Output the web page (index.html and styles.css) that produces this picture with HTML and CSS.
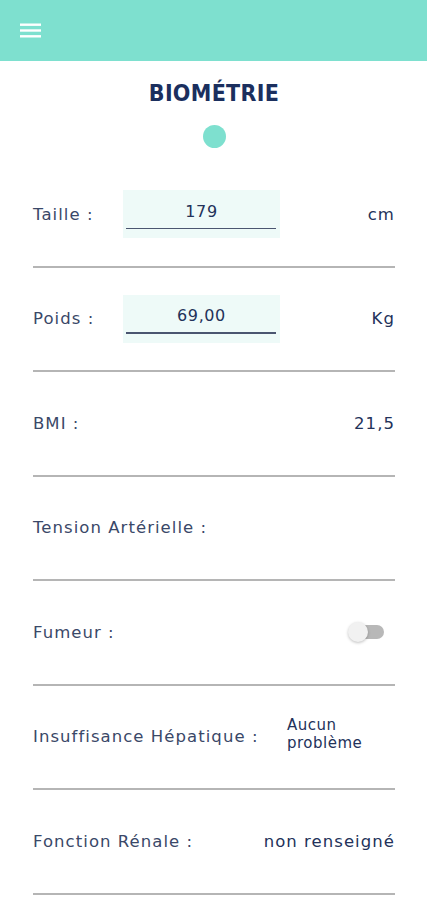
FILE: index.html
```html
<!DOCTYPE html>
<html lang="fr">
<head>
<meta charset="utf-8">
<link rel="stylesheet" href="styles.css">
</head>
<body>
<header class="topbar">
  <svg class="menu" width="21" height="15" viewBox="0 0 21 15"><rect x="0" y="0.5" width="21" height="2.4" fill="#fff"/><rect x="0" y="6.3" width="21" height="2.4" fill="#fff"/><rect x="0" y="12.1" width="21" height="2.4" fill="#fff"/></svg>
</header>
<main class="content">
  <h1 class="title">BIOMÉTRIE</h1>
  <div class="dot"></div>
  <div class="rows">
    <div class="row">
      <span class="label fixed">Taille :</span>
      <div class="field"><span class="field-value">179</span></div>
      <span class="unit">cm</span>
    </div>
    <div class="row">
      <span class="label fixed">Poids :</span>
      <div class="field"><span class="field-value">69,00</span></div>
      <span class="unit">Kg</span>
    </div>
    <div class="row">
      <span class="label">BMI :</span>
      <span class="value">21,5</span>
    </div>
    <div class="row">
      <span class="label">Tension Artérielle :</span>
    </div>
    <div class="row">
      <span class="label">Fumeur :</span>
      <div class="switch"><div class="track"></div><div class="knob"></div></div>
    </div>
    <div class="row">
      <span class="label">Insuffisance Hépatique :</span>
      <span class="value multi"><span class="line">Aucun</span><span class="line">problème</span></span>
    </div>
    <div class="row">
      <span class="label">Fonction Rénale :</span>
      <span class="value">non renseigné</span>
    </div>
  </div>
</main>
</body>
</html>
```
FILE: styles.css
```css
* { box-sizing: border-box; }
html, body { margin: 0; padding: 0; background: #fff; }
body { font-family: "DejaVu Sans", "Noto Sans", sans-serif; color: #2c3a5e; width: 427px; overflow: hidden; }
.topbar { height: 61px; background: #7ee0cf; display: flex; align-items: center; padding-left: 20px; }
.menu { display: block; }
.content { padding: 0 32px 0 33px; }
.title { margin: 18px 0 0; text-align: center; font-family: "DejaVu Sans Condensed", "DejaVu Sans", sans-serif; font-weight: bold; font-size: 23px; letter-spacing: 0.3px; color: #1b2f5e; line-height: 28px; }
.dot { width: 23px; height: 23px; border-radius: 50%; background: #7ee0cf; margin: 18px auto 0; }
.rows { margin-top: 15px; }
.row { height: 104.5px; border-bottom: 2px solid #b5b5b5; display: flex; align-items: center; font-size: 16.5px; letter-spacing: 1.05px; }
.label { flex: 1 1 auto; white-space: nowrap; color: #3a4868; }
.label.fixed { flex: 0 0 90px; }
.field { width: 157px; height: 48px; background: #eefaf8; margin: 0 auto 0 0; position: relative; display: flex; align-items: center; justify-content: center; padding-bottom: 6px; }
.field::after { content: ""; position: absolute; left: 3px; right: 4px; bottom: 9px; height: 1.5px; background: #4a5570; }
.field-value { font-size: 16px; color: #23325a; letter-spacing: 0.6px; }
.unit, .value { white-space: nowrap; color: #23325a; }
.value.multi { display: flex; flex-direction: column; width: 108px; margin-top: -4px; letter-spacing: 0.5px; font-size: 15px; }
.line { display: block; line-height: 17.5px; }
.switch { position: relative; width: 36px; height: 20px; margin-right: 11px; }
.track { position: absolute; left: 6px; top: 3px; width: 30px; height: 14px; border-radius: 7px; background: #b8b8b8; }
.knob { position: absolute; left: 0; top: 0; width: 20px; height: 20px; border-radius: 50%; background: #f1f1f1; box-shadow: 0 1px 3px rgba(0,0,0,0.25); }
```
